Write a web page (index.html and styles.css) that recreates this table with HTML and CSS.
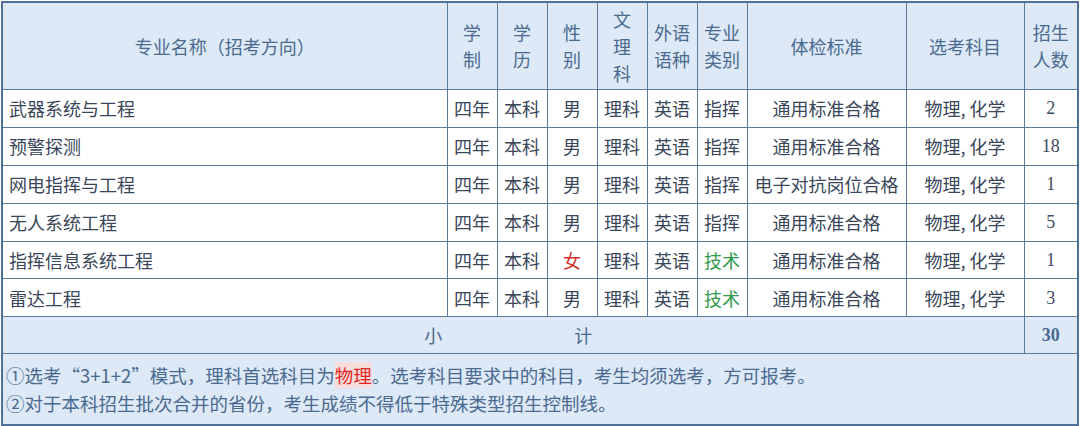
FILE: index.html
```html
<!DOCTYPE html>
<html lang="zh">
<head>
<meta charset="utf-8">
<title>招生计划</title>
<link rel="stylesheet" href="styles.css">
</head>
<body>
<table class="plan">
  <colgroup>
    <col class="c-name">
    <col class="c-s"><col class="c-s"><col class="c-s"><col class="c-s"><col class="c-s"><col class="c-s">
    <col class="c-tj">
    <col class="c-xk">
    <col class="c-num">
  </colgroup>
  <thead>
    <tr class="head">
      <th>专业名称（招考方向）</th>
      <th>学<br>制</th>
      <th>学<br>历</th>
      <th>性<br>别</th>
      <th>文<br>理<br>科</th>
      <th>外语<br>语种</th>
      <th>专业<br>类别</th>
      <th>体检标准</th>
      <th>选考科目</th>
      <th>招生<br>人数</th>
    </tr>
  </thead>
  <tbody>
    <tr class="row">
      <td class="name">武器系统与工程</td><td>四年</td><td>本科</td><td>男</td><td>理科</td><td>英语</td><td>指挥</td><td>通用标准合格</td><td>物理, 化学</td><td class="num">2</td>
    </tr>
    <tr class="row">
      <td class="name">预警探测</td><td>四年</td><td>本科</td><td>男</td><td>理科</td><td>英语</td><td>指挥</td><td>通用标准合格</td><td>物理, 化学</td><td class="num">18</td>
    </tr>
    <tr class="row">
      <td class="name">网电指挥与工程</td><td>四年</td><td>本科</td><td>男</td><td>理科</td><td>英语</td><td>指挥</td><td>电子对抗岗位合格</td><td>物理, 化学</td><td class="num">1</td>
    </tr>
    <tr class="row">
      <td class="name">无人系统工程</td><td>四年</td><td>本科</td><td>男</td><td>理科</td><td>英语</td><td>指挥</td><td>通用标准合格</td><td>物理, 化学</td><td class="num">5</td>
    </tr>
    <tr class="row">
      <td class="name">指挥信息系统工程</td><td>四年</td><td>本科</td><td class="red">女</td><td>理科</td><td>英语</td><td class="green">技术</td><td>通用标准合格</td><td>物理, 化学</td><td class="num">1</td>
    </tr>
    <tr class="row">
      <td class="name">雷达工程</td><td>四年</td><td>本科</td><td>男</td><td>理科</td><td>英语</td><td class="green">技术</td><td>通用标准合格</td><td>物理, 化学</td><td class="num">3</td>
    </tr>
    <tr class="total">
      <td colspan="9" class="total-label"><span>小</span><span class="gap">计</span></td>
      <td class="num total-num">30</td>
    </tr>
    <tr class="notes">
      <td colspan="10">
        <p>①选考“3+1+2”模式，理科首选科目为<span class="hl">物理</span>。选考科目要求中的科目，考生均须选考，方可报考。</p>
        <p>②对于本科招生批次合并的省份，考生成绩不得低于特殊类型招生控制线。</p>
      </td>
    </tr>
  </tbody>
</table>
</body>
</html>
```

FILE: styles.css
```css
html, body {
  margin: 0;
  padding: 0;
  background: #ffffff;
}

body {
  padding: 1px 0 0 1px;
  font-family: "Noto Sans CJK SC", "Noto Sans", sans-serif;
  color: #3a4659;
}

.plan {
  border-collapse: collapse;
  table-layout: fixed;
  width: 1078px;
  border: 2px solid #4d7098;
  font-size: 18px;
}

.c-name { width: 445px; }
.c-s { width: 50px; }
.c-tj { width: 159px; }
.c-xk { width: 118px; }
.c-num { width: 54px; }

.plan th,
.plan td {
  border: 1px solid #5a7a9e;
  padding: 0;
  text-align: center;
  vertical-align: middle;
  white-space: nowrap;
}

.head th {
  height: 86px;
  background: #dde9f6;
  color: #4b6a90;
  font-weight: normal;
  line-height: 27px;
  font-size: 18px;
}

.row td {
  height: 36.9px;
  line-height: 24px;
  background: #ffffff;
}

.plan td.name {
  text-align: left;
  padding-left: 6px;
}

.num {
  font-family: "Liberation Serif", "Times New Roman", serif;
  font-size: 18px;
  color: #3d4a5c;
}

.red { color: #d2302c; }
.green { color: #2f9a4c; }

.total td {
  height: 36px;
  background: #dde9f6;
  color: #4b6a90;
}

.total-label {
  padding-right: 10px !important;
}

.total-label .gap {
  margin-left: 132px;
}

.total-num {
  font-weight: bold;
  color: #2f5a88;
}

.notes td {
  height: 70px;
  background: #dde9f6;
  text-align: left;
  padding-left: 3px;
  color: #4b6a90;
  font-size: 18.5px;
}

.notes p {
  margin: 0;
  line-height: 28px;
}

.hl {
  color: #e0261f;
  background: #f7dcdc;
}
```
